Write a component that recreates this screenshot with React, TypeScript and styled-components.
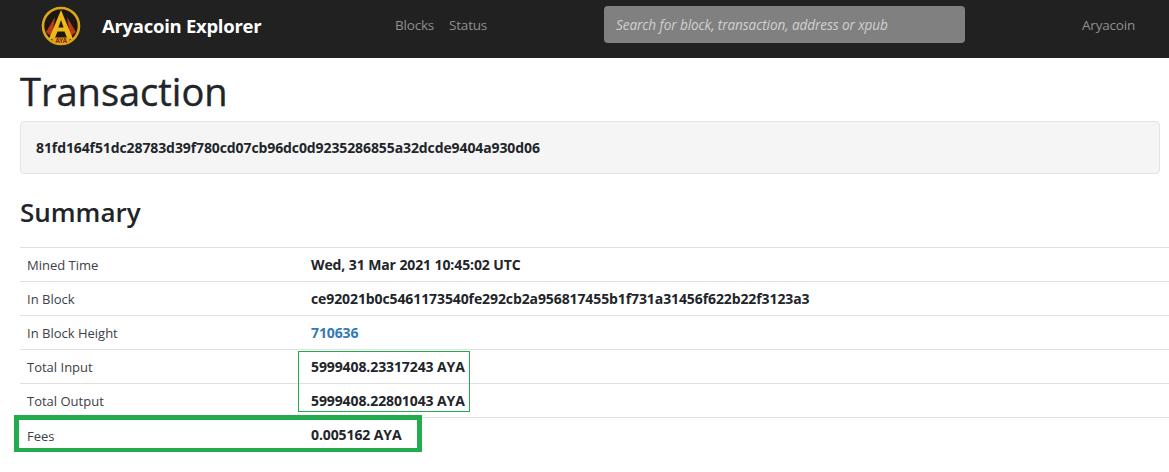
import React from "react";
import styled, { createGlobalStyle } from "styled-components";

const FONT = `"Open Sans", "Noto Sans", "Liberation Sans", sans-serif`;

const GlobalStyle = createGlobalStyle`
  html, body {
    margin: 0;
    padding: 0;
    background: #fff;
    overflow: hidden;
  }
  body {
    font-family: ${FONT};
    font-size: 14px;
    color: #212529;
  }
`;

const Navbar = styled.nav`
  height: 58px;
  background: #212121;
  display: flex;
  align-items: center;
  padding-left: 41px;
  padding-bottom: 9px;
  box-sizing: border-box;
`;

const Brand = styled.a`
  display: flex;
  align-items: center;
  gap: 21px;
  width: 354px;
  margin-top: 3px;
  color: #fff;
  font-size: 18.5px;
  font-weight: 700;
  letter-spacing: -0.28px;
`;

const BrandName = styled.span`
  margin-bottom: 2px;
`;

const NavLinks = styled.div`
  display: flex;
  gap: 15px;
  width: 209px;
  margin-top: 1px;
`;

const NavLink = styled.a`
  color: #8f8f8f;
  font-size: 13.5px;
  letter-spacing: -0.2px;
`;

const Search = styled.input`
  width: 361px;
  height: 37px;
  box-sizing: border-box;
  border: 0;
  border-radius: 4px;
  background: #808080;
  padding: 0 12px;
  margin-right: 117px;
  font-family: ${FONT};
  font-size: 13.6px;
  font-style: italic;
  letter-spacing: -0.1px;
  &::placeholder {
    color: #d0d0d0;
    opacity: 1;
  }
`;

const Main = styled.main`
  position: relative;
  padding: 7px 0 0 20px;
`;

const Title = styled.h1`
  margin: 0;
  font-size: 38px;
  font-weight: 400;
  line-height: 52px;
  color: #212529;
  -webkit-text-stroke: 0.4px #212529;
`;

const HashWell = styled.div`
  box-sizing: border-box;
  height: 53px;
  margin: 4px 9px 0 0;
  padding: 0 15px;
  display: flex;
  align-items: center;
  background: #f5f5f5;
  border: 1px solid #e3e3e3;
  border-radius: 4px;
  font-size: 14px;
  font-weight: 700;
  letter-spacing: -0.1px;
`;

const Heading = styled.h3`
  margin: 21px 0 18px;
  font-size: 26px;
  font-weight: 600;
  line-height: 34px;
`;

const Table = styled.div`
  border-top: 1px solid #dee2e6;
`;

const Row = styled.div`
  display: grid;
  grid-template-columns: 284px 1fr;
  align-items: center;
  height: 34px;
  box-sizing: border-box;
  border-bottom: 1px solid #dee2e6;
  padding: 1px 0 0 7px;
  font-size: 13px;

  &:last-child {
    border-bottom: 0;
  }
`;

const Label = styled.span`
  color: #3b4148;
`;

const Value = styled.span`
  margin-bottom: 2px;
  font-size: 14px;
  letter-spacing: -0.1px;
  font-weight: 700;
  color: #212529;
`;

const ValueLink = styled(Value).attrs({ as: "a" })`
  color: #337ab7;
`;

const Highlight = styled.div<{ $x: number; $y: number; $w: number; $h: number; $line: number }>`
  position: absolute;
  left: ${(p) => p.$x}px;
  top: ${(p) => p.$y}px;
  width: ${(p) => p.$w}px;
  height: ${(p) => p.$h}px;
  box-sizing: border-box;
  border: ${(p) => p.$line}px solid #22ac4e;
  pointer-events: none;
`;

const AyaLogo = () => (
  <svg width="40" height="40" viewBox="0 0 40 40">
    <circle cx="20" cy="20" r="18" fill="#1d1712" stroke="#dba61c" strokeWidth="2.6" />
    <path d="M5 26 L14 11 L11 31 Z" fill="#b83c18" />
    <path d="M35 26 L26 11 L29 31 Z" fill="#b83c18" />
    <path d="M20 4 L8 33 H13.5 L16.5 25.5 H23.5 L26.5 33 H32 Z M20 14 L22.6 21.5 H17.4 Z" fill="#f0b91a" fillRule="evenodd" />
    <path d="M10 31.5 H30 L26 38 H14 Z" fill="#e5a518" />
    <text x="20" y="37" fontFamily="Liberation Sans" fontSize="6.5" fontWeight="700" textAnchor="middle" fill="#7d2410">AYA</text>
  </svg>
);

const rows: { label: string; value: string; link?: boolean }[] = [
  { label: "Mined Time", value: "Wed, 31 Mar 2021 10:45:02 UTC" },
  { label: "In Block", value: "ce92021b0c5461173540fe292cb2a956817455b1f731a31456f622b22f3123a3" },
  { label: "In Block Height", value: "710636", link: true },
  { label: "Total Input", value: "5999408.23317243 AYA" },
  { label: "Total Output", value: "5999408.22801043 AYA" },
  { label: "Fees", value: "0.005162 AYA" },
];

export default function App() {
  return (
    <>
      <GlobalStyle />
      <Navbar>
        <Brand>
          <AyaLogo />
          <BrandName>Aryacoin Explorer</BrandName>
        </Brand>
        <NavLinks>
          <NavLink>Blocks</NavLink>
          <NavLink>Status</NavLink>
        </NavLinks>
        <Search placeholder="Search for block, transaction, address or xpub" />
        <NavLink>Aryacoin</NavLink>
      </Navbar>
      <Main>
        <Title>Transaction</Title>
        <HashWell>81fd164f51dc28783d39f780cd07cb96dc0d9235286855a32dcde9404a930d06</HashWell>
        <Heading>Summary</Heading>
        <Table>
          {rows.map((r) => (
            <Row key={r.label}>
              <Label>{r.label}</Label>
              {r.link ? <ValueLink>{r.value}</ValueLink> : <Value>{r.value}</Value>}
            </Row>
          ))}
        </Table>
        <Highlight $x={298} $y={293} $w={172} $h={61} $line={1} />
        <Highlight $x={14} $y={357} $w={408} $h={38} $line={5} />
      </Main>
    </>
  );
}
